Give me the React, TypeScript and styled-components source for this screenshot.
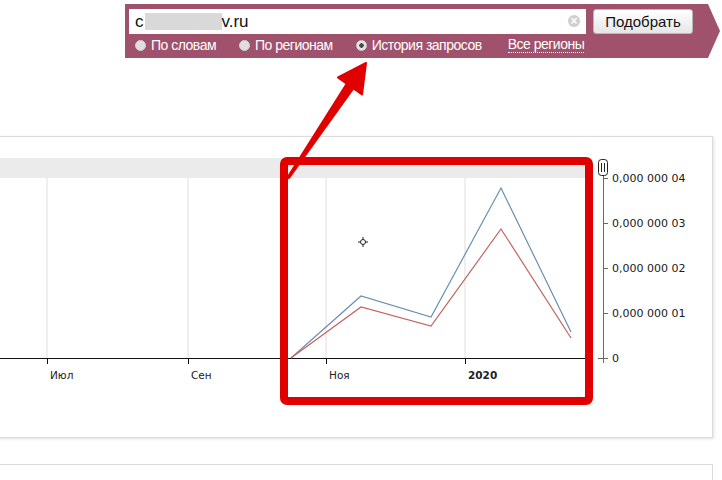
import React from 'react';
import styled, { createGlobalStyle } from 'styled-components';

const radios = [
  { label: 'По словам', checked: false },
  { label: 'По регионам', checked: false },
  { label: 'История запросов', checked: true },
];

const months = [
  { x: 47, label: 'Июл', bold: false },
  { x: 188, label: 'Сен', bold: false },
  { x: 326, label: 'Ноя', bold: false },
  { x: 465, label: '2020', bold: true },
];

const yTicks = [
  { y: 178, label: '0,000 000 04' },
  { y: 223, label: '0,000 000 03' },
  { y: 268, label: '0,000 000 02' },
  { y: 313, label: '0,000 000 01' },
  { y: 358, label: '0' },
];

const blueLine = '291,358 361,296 431,317 501,188 571,332';
const redLine = '291,358 361,307 431,326 501,229 571,338';

function App() {
  return (
    <Page>
      <GlobalStyle />
      <Banner>
        <SearchRow>
          <SearchInput>
            <span>c</span>
            <Redacted />
            <span>v.ru</span>
            <ClearIcon>×</ClearIcon>
          </SearchInput>
          <PickButton>Подобрать</PickButton>
        </SearchRow>
        <ModeRow>
          {radios.map((r) => (
            <RadioItem key={r.label}>
              <Dot $checked={r.checked} />
              {r.label}
            </RadioItem>
          ))}
          <RegionLink>Все регионы</RegionLink>
        </ModeRow>
      </Banner>

      <ChartCard>
        <svg width="721" height="300" viewBox="-9 137 721 300">
          <rect x="-9" y="158" width="601" height="20" fill="#ebebeb" />
          {months.map((m) => (
            <line key={m.label} x1={m.x} y1="178" x2={m.x} y2="358" stroke="#dedede" />
          ))}
          <line x1="-9" y1="358.5" x2="592" y2="358.5" stroke="#111" />
          {months.map((m) => (
            <g key={'t' + m.label}>
              <line x1={m.x + 0.5} y1="358" x2={m.x + 0.5} y2="364" stroke="#111" />
              <text
                x={m.x + 3}
                y="379"
                fontFamily="DejaVu Sans, sans-serif"
                fontSize="10.5"
                fontWeight={m.bold ? 700 : 400}
                fill="#222"
              >
                {m.label}
              </text>
            </g>
          ))}
          <polyline points={blueLine} fill="none" stroke="#6b8fb0" strokeWidth="1.2" />
          <polyline points={redLine} fill="none" stroke="#c4645e" strokeWidth="1.2" />

          <line x1="603.5" y1="174" x2="603.5" y2="363" stroke="#a0524f" />
          {yTicks.map((t) => (
            <g key={t.label}>
              <line x1="603" y1={t.y + 0.5} x2="608" y2={t.y + 0.5} stroke="#666" />
              <text x="612" y={t.y + 4} fontFamily="DejaVu Sans, sans-serif" fontSize="11" fill="#1a1a1a">
                {t.label}
              </text>
            </g>
          ))}
          <line x1="598" y1="358.5" x2="603" y2="358.5" stroke="#666" />
          <rect x="598.5" y="159.5" width="9" height="16" rx="3" fill="#fff" stroke="#222" />
          <line x1="601.5" y1="163" x2="601.5" y2="172" stroke="#222" />
          <line x1="604.5" y1="163" x2="604.5" y2="172" stroke="#222" />

          <g stroke="#222" strokeWidth="1" fill="none">
            <circle cx="363" cy="242" r="2.5" />
            <line x1="363" y1="237" x2="363" y2="239.5" />
            <line x1="363" y1="244.5" x2="363" y2="247" />
            <line x1="358" y1="242" x2="360.5" y2="242" />
            <line x1="365.5" y1="242" x2="368" y2="242" />
          </g>
        </svg>
      </ChartCard>
      <NextCard />

      <Annotation width="722" height="480" viewBox="0 0 722 480">
        <rect x="284" y="161" width="305" height="240" rx="3" fill="none" stroke="#e10000" strokeWidth="8" />
        <polygon
          points="287.5,177.5 289,178 353.3,88.3 362,94.5 366,63 338,77.5 346.7,83.7"
          fill="#e10000"
          stroke="#e10000"
          strokeWidth="2"
          strokeLinejoin="round"
        />
      </Annotation>
    </Page>
  );
}

const GlobalStyle = createGlobalStyle`
  body {
    margin: 0;
    background: #fff;
    font-family: "Liberation Sans", Arial, sans-serif;
  }
`;

const Page = styled.div`
  position: relative;
  width: 722px;
  height: 480px;
  overflow: hidden;
  padding-top: 4px;
  box-sizing: border-box;
`;

const Banner = styled.div`
  margin-left: 125px;
  width: 595px;
  height: 54px;
  box-sizing: border-box;
  padding: 5px 27px 0 4px;
  background: #a0526c;
  clip-path: polygon(0 0, calc(100% - 12px) 0, 100% 50%, calc(100% - 12px) 100%, 0 100%);
  display: flex;
  flex-direction: column;
`;

const SearchRow = styled.div`
  display: flex;
  gap: 7px;
  height: 25px;
`;

const SearchInput = styled.div`
  position: relative;
  width: 457px;
  height: 25px;
  box-sizing: border-box;
  background: #fff;
  display: flex;
  align-items: center;
  padding-left: 6px;
  font-size: 17px;
  color: #111;
`;

const Redacted = styled.span`
  display: inline-block;
  width: 77px;
  height: 17px;
  background: #d9d9d9;
  margin-left: 1px;
`;

const ClearIcon = styled.span`
  position: absolute;
  right: 6px;
  top: 6px;
  width: 12px;
  height: 12px;
  border-radius: 50%;
  background: #cfcfcf;
  color: #fff;
  font-size: 12px;
  line-height: 12px;
  text-align: center;
  font-weight: bold;
`;

const PickButton = styled.button`
  width: 100px;
  height: 25px;
  padding: 0;
  border: 1px solid #b8b8b8;
  border-radius: 3px;
  background: linear-gradient(#ffffff, #e6e6e6);
  font-family: "Liberation Sans", Arial, sans-serif;
  font-size: 15px;
  color: #111;
`;

const ModeRow = styled.div`
  display: flex;
  align-items: center;
  height: 22px;
  margin-top: 0;
  padding-left: 6px;
  gap: 23px;
  color: #fff;
  font-size: 14px;
  letter-spacing: -0.5px;
`;

const RadioItem = styled.span`
  display: flex;
  align-items: center;
  gap: 5px;
`;

const Dot = styled.span<{ $checked: boolean }>`
  width: 11px;
  height: 11px;
  border-radius: 50%;
  box-sizing: border-box;
  background: ${(p) => (p.$checked ? 'radial-gradient(circle, #4a4a4a 0 2px, #e6e6e6 2.5px)' : '#e0e0e0')};
  border: 1px solid #cfcfcf;
`;

const RegionLink = styled.span`
  margin-left: 3px;
  border-bottom: 1px dotted #fff;
  line-height: 15px;
`;

const ChartCard = styled.div`
  margin-top: 78px;
  margin-left: -10px;
  width: 723px;
  height: 302px;
  box-sizing: border-box;
  border: 1px solid #dcdcdc;
  box-shadow: 1px 1px 3px rgba(0, 0, 0, 0.12);
  background: #fff;
  svg {
    display: block;
  }
`;

const NextCard = styled.div`
  margin-top: 26px;
  margin-left: -10px;
  width: 723px;
  height: 40px;
  border: 1px solid #dcdcdc;
  box-sizing: border-box;
`;

const Annotation = styled.svg`
  position: absolute;
  left: 0;
  top: 0;
  pointer-events: none;
`;

export default App;
